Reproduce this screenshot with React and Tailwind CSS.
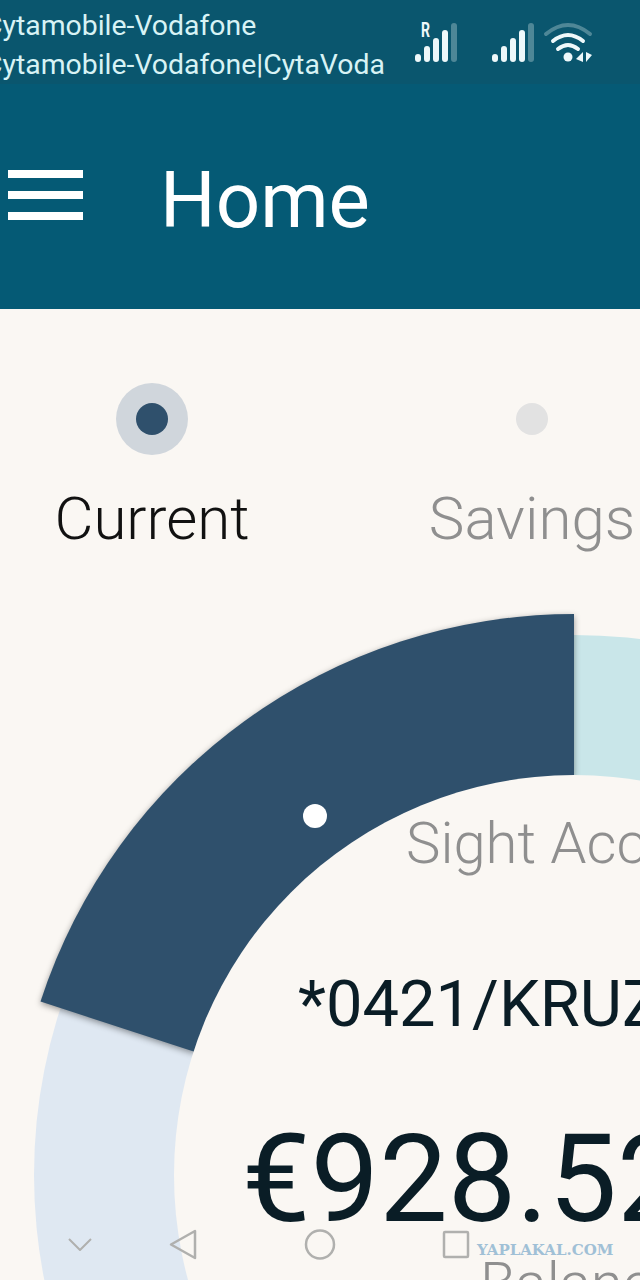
import React from "react";

function SignalBars({ x }) {
    return (
        <g fill="#eef8fa">
            <rect x={x} y="54" width="6" height="8" rx="3" />
            <rect x={x + 9} y="46" width="6" height="16" rx="3" />
            <rect x={x + 18} y="38" width="6" height="24" rx="3" />
            <rect x={x + 27} y="30" width="6" height="32" rx="3" />
            <rect x={x + 36} y="23" width="6" height="39" rx="3" opacity="0.3" />
        </g>
    );
}

function StatusIcons() {
    return (
        <svg width="190" height="84" viewBox="410 0 190 84" className="shrink-0">
            <text
                x="421"
                y="37"
                fill="#eef8fa"
                fontSize="20"
                fontWeight="700"
                fontFamily="Roboto, sans-serif"
                textLength="9"
                lengthAdjust="spacingAndGlyphs"
            >
                R
            </text>
            <SignalBars x={415} />
            <SignalBars x={492} />
            <g fill="none" stroke="#eef8fa" strokeWidth="4" strokeLinecap="round">
                <path d="M558 49 Q568 41 578 49" />
                <path d="M553 41 Q568 29 583 41" />
                <path d="M546 34 Q568 16 590 34" opacity="0.3" />
            </g>
            <circle cx="568" cy="57" r="4.5" fill="#eef8fa" />
            <path d="M583 52 L583 62 L576 59 Z" fill="#eef8fa" />
            <path d="M586 52 L586 62 L592 55 Z" fill="#eef8fa" />
        </svg>
    );
}

function AccountChart() {
    return (
        <svg width="640" height="720" viewBox="0 560 640 720" className="absolute left-0 top-0">
            <path d="M574 635 A540 540 0 0 0 574 1715 Z" fill="#dfe8f2" />
            <path d="M574 635 A540 540 0 0 1 574 1715 Z" fill="#c9e6e9" />
            <path
                d="M574 614 A561 561 0 0 0 40.5 1001.6 L193.6 1051.4 L574 775 Z"
                fill="#2f506c"
                className="drop-shadow-[0_2px_3px_rgba(0,0,0,0.4)]"
            />
            <circle cx="574" cy="1175" r="400" fill="#faf7f3" />
            <circle cx="315" cy="816" r="12" fill="#ffffff" />
        </svg>
    );
}

function NavBar() {
    return (
        <div className="absolute bottom-0 left-0 w-[640px] h-[60px]">
            <svg width="640" height="60" viewBox="0 1220 640 60">
                <g fill="none" stroke="#b0b0ae" strokeWidth="2.5" strokeLinejoin="round">
                    <path d="M69 1239 L80 1250 L91 1239" strokeWidth="2" />
                    <path d="M195 1231 L195 1258 L171 1244.5 Z" />
                    <circle cx="320" cy="1244.5" r="14" />
                    <rect x="444" y="1232" width="24" height="25" rx="1" />
                </g>
            </svg>
            <span className="absolute left-[477px] top-[20px] font-['DejaVu_Serif',serif] font-bold text-[15px] leading-[20px] text-[#a0c0d6]">
                YAPLAKAL.COM
            </span>
        </div>
    );
}

export default function App() {
    return (
        <div className="relative w-[640px] h-[1280px] overflow-hidden flex flex-col bg-[#faf7f3] font-['Roboto',sans-serif]">
            <div className="h-[84px] flex shrink-0 bg-[#0a566e] text-[#d8f3f5] text-[28.4px] leading-[39px]">
                <div className="w-[410px] pt-[6px] -ml-[16px] shrink-0 whitespace-nowrap">
                    <div>Cytamobile-Vodafone</div>
                    <div>Cytamobile-Vodafone|CytaVoda</div>
                </div>
                <div className="ml-[16px]">
                    <StatusIcons />
                </div>
            </div>

            <div className="h-[225px] flex items-center shrink-0 bg-[#055a75] text-white">
                <div className="ml-[8px] w-[75px] flex flex-col gap-[13px] -mt-[3px]">
                    <div className="h-[8px] bg-white" />
                    <div className="h-[8px] bg-white" />
                    <div className="h-[8px] bg-white" />
                </div>
                <div className="ml-[77px] text-[78px] leading-none mt-[8px]">Home</div>
            </div>

            <div className="flex w-[760px] pt-[74px] shrink-0">
                <div className="w-[304px] flex flex-col items-center">
                    <div className="w-[72px] h-[72px] rounded-full bg-[#d0d6dc] flex items-center justify-center">
                        <div className="w-[32px] h-[32px] rounded-full bg-[#2f506c]" />
                    </div>
                    <div className="mt-[32px] text-[60px] leading-[64px] font-light text-[#111]">Current</div>
                </div>
                <div className="w-[456px] flex flex-col items-center">
                    <div className="w-[72px] h-[72px] flex items-center justify-center">
                        <div className="w-[32px] h-[32px] rounded-full bg-[#e2e2e2]" />
                    </div>
                    <div className="mt-[32px] text-[60px] leading-[64px] font-light text-[#8f8f8f]">Savings</div>
                </div>
            </div>

            <div className="absolute left-0 top-[560px] w-[640px] h-[720px]">
                <AccountChart />
                <div className="relative flex flex-col whitespace-nowrap">
                    <div className="ml-[406px] mt-[253px] text-[58px] leading-[60px] font-light text-[#8f8f8f]">Sight Account</div>
                    <div className="ml-[298px] mt-[99px] text-[65px] leading-[64px] text-[#0a1d26]">*0421/KRUZ</div>
                    <div className="ml-[242px] mt-[74px] text-[122px] leading-[140px] text-[#0a1d26]">€928.52</div>
                    <div className="ml-[480px] mt-[3px] text-[58px] leading-[60px] font-light text-[#8f8f8f]">Balance</div>
                </div>
            </div>

            <NavBar />
        </div>
    );
}
